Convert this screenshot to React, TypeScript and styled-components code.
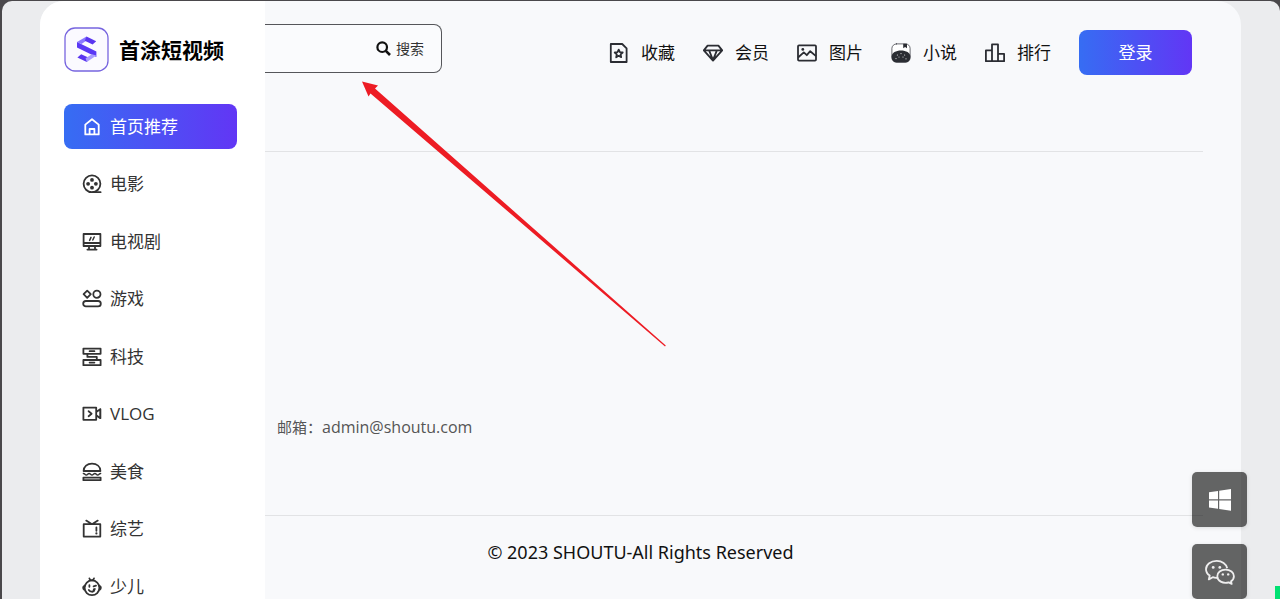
import React from "react";
import styled, { createGlobalStyle } from "styled-components";

const GlobalStyle = createGlobalStyle`
  *, *::before, *::after { box-sizing: border-box; }
  body {
    margin: 0;
    background: #4a484b;
    color: #111;
    font-family: "Open Sans", "Noto Sans CJK SC", sans-serif;
    font-size: 17px;
    line-height: 24px;
  }
  a { color: inherit; text-decoration: none; }
  button { font: inherit; border: 0; cursor: pointer; }
`;

const Frame = styled.div`
  position: relative;
  height: 100vh;
  padding: 1px 0 0 2px;
  overflow: hidden;
  background: #4a484b;
`;

const Canvas = styled.div`
  height: 100%;
  padding: 0 39px 0 38px;
  border-radius: 10px 10px 0 0;
  background: #ebecee;
`;

const Shell = styled.div`
  display: flex;
  height: 100%;
  border-radius: 24px 24px 0 0;
  overflow: hidden;
  background: #f8f9fb;
`;

const Sidebar = styled.aside`
  flex: none;
  width: 225px;
  padding: 26px 28px 0 24px;
  background: #fff;
`;

const Brand = styled.a`
  display: flex;
  align-items: center;
  gap: 10px;
  margin-bottom: 32px;
  color: #000;
  font-size: 21px;
  font-weight: 700;
  white-space: nowrap;
`;

const Menu = styled.nav`
  display: flex;
  flex-direction: column;
  justify-content: space-between;
  min-height: 505px;
`;

const MenuLink = styled.a<{ $active?: boolean }>`
  display: flex;
  align-items: center;
  gap: 8px;
  height: 45px;
  padding-left: 18px;
  border-radius: 8px;
  color: ${(p) => (p.$active ? "#fff" : "#333")};
  background: ${(p) => (p.$active ? "linear-gradient(90deg, #366df3, #6236f5)" : "none")};
`;

const Main = styled.main`
  flex: 1;
  min-width: 0;
  display: flex;
  flex-direction: column;
  padding-right: 38px;
`;

const Header = styled.header`
  display: flex;
  justify-content: space-between;
  align-items: flex-start;
  height: 151px;
  padding: 23px 11px 0 0;
  border-bottom: 1px solid #e2e3e5;
`;

const SearchForm = styled.form`
  display: flex;
  align-items: center;
  width: 177px;
  height: 49px;
  padding-right: 17px;
  border: 1px solid #55565a;
  border-left: 0;
  border-radius: 0 8px 8px 0;
  background: #fafbfd;
`;

const SearchInput = styled.input`
  flex: 1;
  min-width: 0;
  height: 100%;
  padding: 0 8px;
  border: 0;
  outline: 0;
  background: transparent;
  font: inherit;
`;

const SearchButton = styled.button`
  display: flex;
  align-items: center;
  gap: 5px;
  padding: 0;
  background: none;
  color: #333;
  font-size: 14px;
  white-space: nowrap;
`;

const TopNav = styled.nav`
  display: flex;
  align-items: center;
  gap: 28px;
  margin-top: 6px;
`;

const TopLink = styled.a`
  display: flex;
  align-items: center;
  gap: 12px;
  white-space: nowrap;
`;

const LoginButton = styled.button`
  width: 113px;
  height: 45px;
  border-radius: 8px;
  color: #fff;
  background: linear-gradient(90deg, #366df3, #6236f5);
`;

const Contact = styled.section`
  flex: 1;
  display: flex;
  align-items: flex-end;
  padding: 0 0 76px 12px;
  color: #555;
  font-size: 15px;
`;

const Email = styled.a`
  font-size: 16px;
`;

const Footer = styled.footer`
  padding: 24px 187px 35px 0;
  border-top: 1px solid #e2e3e5;
  font-family: "Noto Sans", "Noto Sans CJK SC", sans-serif;
  font-size: 18px;
  text-align: center;
`;

const FloatBar = styled.div`
  position: fixed;
  right: 33px;
  bottom: 0;
  display: flex;
  flex-direction: column;
  gap: 17px;
`;

const FloatButton = styled.button`
  display: flex;
  align-items: center;
  justify-content: center;
  width: 55px;
  height: 55px;
  padding: 0;
  border-radius: 5px;
  color: #fff;
  background: rgba(0, 0, 0, 0.6);
  box-shadow: 0 1px 4px rgba(0, 0, 0, 0.12);
`;

const EdgeMarker = styled.span`
  position: absolute;
  right: 0;
  bottom: 0;
  width: 5px;
  height: 13px;
  background: #00e172;
`;

const Arrow = styled.svg`
  position: absolute;
  left: 362px;
  top: 81px;
  pointer-events: none;
`;

const Glyph = styled.svg`
  flex: none;
  display: block;
  fill: none;
  stroke: currentColor;
  stroke-width: 1.8;
  stroke-linejoin: round;
  stroke-linecap: round;
`;

const TopGlyph = styled(Glyph)`
  color: #2b2d33;
`;

const dot = { fill: "currentColor", stroke: "none" };

const menu = [
  {
    label: "首页推荐",
    icon: <path d="M3.3 17.4V7.6L10 2.200l6.7 5.400v9.800zM7.600 17.400v-5.400h4.800v5.400" />,
  },
  {
    label: "电影",
    icon: (
      <>
        <circle cx="10" cy="9.800" r="8.400" />
        <path d="M11 18.200h7.600" />
        <g {...dot}>
          <circle cx="10" cy="5.900" r="1.900" />
          <circle cx="10" cy="13.700" r="1.900" />
          <circle cx="6.100" cy="9.800" r="1.900" />
          <circle cx="13.900" cy="9.800" r="1.900" />
        </g>
      </>
    ),
  },
  {
    label: "电视剧",
    icon: (
      <>
        <path d="M1.600 2h16.800v12H1.600zM1.600 11h16.800M7 14.200v3M13 14.200v3M5.400 17.600h9.200" />
        <path d="M7.600 8.400 9 5.400M10.800 8l1.400-3" strokeWidth="1.500" />
      </>
    ),
  },
  {
    label: "游戏",
    icon: (
      <>
        <path d="M5.200 1.600 8.800 5.200 5.200 8.800 1.600 5.200z" />
        <circle cx="14.900" cy="5.200" r="3.600" />
        <rect x="1.200" y="12" width="17.600" height="5.400" rx="2.700" />
      </>
    ),
  },
  {
    label: "科技",
    icon: (
      <path d="M1.400 1.600h17.200v5.200H1.400zM1.400 13h17.200v5.200H1.400zM7.600 4.200h4.800M7.600 15.600h4.800M5.400 7v2.900h9.400V13" />
    ),
  },
  {
    label: "VLOG",
    icon: (
      <path d="M1.400 3.600h12.800v12.200H1.400zM6.600 7.200 9.600 9.700l-3 2.500M14.600 7.800l3.600-2.600v9l-3.600-2.600M18.400 5.200v9" />
    ),
  },
  {
    label: "美食",
    icon: (
      <>
        <path d="M1.600 9C1.600 4.400 5.200 1.600 10 1.600S18.400 4.400 18.400 9zM1.400 15.600h17.200v2.600H1.400z" />
        <path d="M1.400 11.400c1.400 0 1.600 1.600 2.900 1.600s1.500-1.600 2.800-1.600S8.700 13 10 13s1.600-1.600 2.900-1.600 1.500 1.600 2.800 1.600 1.500-1.600 2.900-1.600" strokeWidth="1.500" />
      </>
    ),
  },
  {
    label: "综艺",
    icon: (
      <>
        <path d="M1.700 5.200h16.600v12.400H1.700zM4.200 1.600 10 5.200l5.800-3.600M14.400 8.400v3.400" />
        <circle cx="14.400" cy="14.400" r="1.100" {...dot} />
      </>
    ),
  },
  {
    label: "少儿",
    icon: (
      <>
        <circle cx="10" cy="10.800" r="7.400" />
        <path d="M7.400 1.400c.4 1.300 1.300 2 2.600 2M12 1.400c-.2.900-.8 1.600-2 2M2.200 9c-1.400.8-1.400 2.800 0 3.600M17.800 9c1.400.8 1.400 2.800 0 3.600" />
        <path d="M7.400 8.200v1.600M11.600 9.400l2.400-.8M6.800 13c1.600 2.600 5.400 2.200 6-1l-1 .4c.2 1.400-.6 2.200-1.600 2.400" />
      </>
    ),
  },
];

const topLinks = [
  {
    label: "收藏",
    icon: (
      <path d="M1.800 1h11.400l4.400 4.400V19H1.800zM9.700 6.600l1.200 2.600 2.800.3-2.100 1.900.6 2.800-2.500-1.400-2.500 1.400.6-2.800-2.100-1.900 2.800-.3z" />
    ),
  },
  {
    label: "会员",
    icon: <path d="M4.600 2.600h10.800l3.800 4.800L10 17.600.8 7.400zM1 7.400h18M6.200 7.600 10 17.200l3.800-9.600" />,
  },
  {
    label: "图片",
    icon: (
      <>
        <rect x="1" y="2.400" width="18" height="15.200" rx="1" />
        <path d="m1.600 14 5.200-4.600 3 2.800 3.400-4 5.200 4.400" />
        <circle cx="5.800" cy="6.400" r="1.400" {...dot} />
      </>
    ),
  },
  {
    label: "小说",
    icon: (
      <>
        <rect x="0.9" y="0.9" width="18.200" height="18.200" rx="4.500" strokeWidth="0.7" fill="#fff" />
        <path d="M12.200.8h3.800v4.400l-1.900-1.300-1.900 1.300z" {...dot} />
        <path d="M.6 13.600C.6 9.800 5 7.600 10 7.600s9.400 2.200 9.400 6c0 3.600-1.800 5.800-4.800 5.800H5.400C2.400 19.400.6 17.200.6 13.600z" {...dot} />
        <g fill="#ddd" stroke="none">
          <circle cx="6.400" cy="12" r=".6" />
          <circle cx="10" cy="10.600" r=".6" />
          <circle cx="13.600" cy="12" r=".6" />
          <circle cx="8" cy="14" r=".5" />
          <circle cx="12" cy="14" r=".6" />
          <circle cx="5" cy="15.600" r=".6" />
          <circle cx="15" cy="15.800" r=".6" />
        </g>
      </>
    ),
  },
  {
    label: "排行",
    icon: <path d="M.9 7.400H7v10.800H.9zM7 1.400h6v16.800H7zM13 10.800h6.100v7.400H13z" />,
  },
];

const LogoMark = () => (
  <svg width="45" height="45" viewBox="0 0 45 45" aria-hidden="true">
    <rect x="1" y="1" width="43" height="43" rx="10" fill="#fbfaff" stroke="#7765df" strokeWidth="1.300" />
    <path d="M13 15 22.500 9.600V13.600L17.500 17z" fill="#8a78ff" />
    <path d="M22.500 9.600 32.200 14.200 28.600 17.600 20.800 13.700z" fill="#5a35f0" />
    <path d="M13 15 32.400 24.600V30L13 20.600z" fill="#5a38f5" />
    <path d="M13.400 30.600 17.200 27.200 25.400 31 22.800 35z" fill="#5a35f0" />
    <path d="M32.400 28.600 22.800 35 21.600 31.200 27.800 27.300z" fill="#a99cff" />
  </svg>
);

export default function App() {
  return (
    <>
      <GlobalStyle />
      <Frame lang="zh-CN">
        <Canvas>
          <Shell>
            <Sidebar>
              <Brand href="#">
                <LogoMark />
                首涂短视频
              </Brand>
              <Menu>
                {menu.map((item, i) => (
                  <MenuLink key={item.label} href="#" $active={i === 0}>
                    <Glyph width="20" height="20" viewBox="0 0 20 20" aria-hidden="true">
                      {item.icon}
                    </Glyph>
                    {item.label}
                  </MenuLink>
                ))}
              </Menu>
            </Sidebar>
            <Main>
              <Header>
                <SearchForm onSubmit={(e) => e.preventDefault()}>
                  <SearchInput type="text" aria-label="搜索" />
                  <SearchButton type="submit">
                    <svg width="15" height="15" viewBox="0 0 15 15" fill="none" stroke="#111" strokeWidth="2.200" aria-hidden="true">
                      <circle cx="6.200" cy="6.200" r="4.800" />
                      <path d="m9.800 9.800 4.200 4.200" strokeWidth="2.600" />
                    </svg>
                    搜索
                  </SearchButton>
                </SearchForm>
                <TopNav>
                  {topLinks.map((item) => (
                    <TopLink key={item.label} href="#">
                      <TopGlyph width="20" height="20" viewBox="0 0 20 20" aria-hidden="true">
                        {item.icon}
                      </TopGlyph>
                      {item.label}
                    </TopLink>
                  ))}
                  <LoginButton type="button">登录</LoginButton>
                </TopNav>
              </Header>
              <Contact>
                邮箱：<Email href="mailto:admin@shoutu.com">admin@shoutu.com</Email>
              </Contact>
              <Footer>© 2023 SHOUTU-All Rights Reserved</Footer>
            </Main>
          </Shell>
        </Canvas>
        <Arrow width="305" height="266" viewBox="0 0 305 266" aria-hidden="true">
          <path d="M0 .5 16 4.500 13 7.500 303.800 264.400 303 265.400 8.500 12.500 6.500 15.500z" fill="#ed1c24" />
        </Arrow>
        <FloatBar>
          <FloatButton type="button" aria-label="Windows">
            <svg width="22" height="22" viewBox="0 0 22 22" fill="#fff" aria-hidden="true">
              <path d="M0 3.200 9 1.900V10.300H0zM10.200 1.700 22 0V10.300H10.200zM0 11.400H9V19.800L0 18.500zM10.200 11.400H22V21.800L10.200 20z" />
            </svg>
          </FloatButton>
          <FloatButton type="button" aria-label="微信">
            <svg width="30" height="26" viewBox="0 0 30 26" fill="none" stroke="#eee" strokeWidth="1.800" strokeLinejoin="round" aria-hidden="true">
              <path d="M12.600 18.800c-1.800.2-3.400 0-4.800-.6L3.800 20.400l.9-3.800C2.400 15 1 12.800 1 10.200c0-4.800 4.800-8.300 10.700-8.300 5.300 0 9.600 3 10.500 7.300" />
              <path d="M20.500 10.600c4.800 0 8.400 3 8.400 6.600 0 2.200-1.100 3.900-2.900 5.100l.7 2.600-3-1.500c-6 1.700-11.400-1.700-11.400-6.200 0-3.700 3.500-6.600 8.200-6.600z" />
              <g fill="#eee" stroke="none">
                <circle cx="8.200" cy="8.400" r="1.400" />
                <circle cx="14.800" cy="8.400" r="1.400" />
                <circle cx="17.800" cy="15.400" r="1.200" />
                <circle cx="23.200" cy="15.400" r="1.200" />
              </g>
            </svg>
          </FloatButton>
        </FloatBar>
        <EdgeMarker />
      </Frame>
    </>
  );
}
